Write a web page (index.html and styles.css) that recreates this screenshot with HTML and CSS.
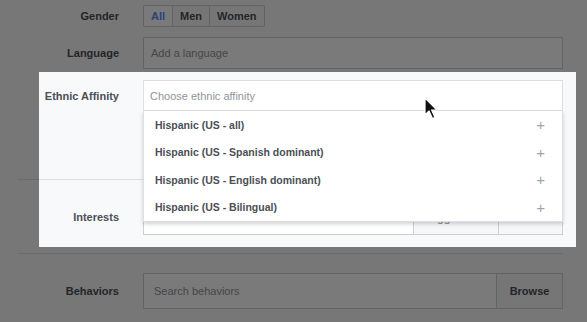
FILE: index.html
```html
<!DOCTYPE html>
<html lang="en">
<head>
  <meta charset="UTF-8">
  <meta name="viewport" content="width=device-width, initial-scale=1.0">
  <title>Audience - Ethnic Affinity</title>
  <link rel="stylesheet" href="styles.css">
</head>
<body>
  <div class="page">
    <div class="form">
      <div class="section first">
        <div class="row">
          <div class="label">Gender</div>
          <div class="control">
            <div class="seg-group">
              <button type="button" class="seg active">All</button><button type="button" class="seg">Men</button><button type="button" class="seg">Women</button>
            </div>
          </div>
        </div>
        <div class="row">
          <div class="label">Language</div>
          <div class="control">
            <div class="field lang">Add a language</div>
          </div>
        </div>
        <div class="row">
          <div class="label">Ethnic Affinity</div>
          <div class="control">
            <div class="field ethnic">Choose ethnic affinity</div>
            <ul class="menu">
              <li class="menu-item"><span>Hispanic (US - all)</span><span class="plus">+</span></li>
              <li class="menu-item"><span>Hispanic (US - Spanish dominant)</span><span class="plus">+</span></li>
              <li class="menu-item"><span>Hispanic (US - English dominant)</span><span class="plus">+</span></li>
              <li class="menu-item"><span>Hispanic (US - Bilingual)</span><span class="plus">+</span></li>
            </ul>
          </div>
        </div>
      </div>

      <div class="section">
        <div class="row">
          <div class="label">Interests</div>
          <div class="control">
            <div class="field search">
              <span class="search-text"></span>
              <span class="side-btn wide">Suggestions</span>
              <span class="side-btn narrow"></span>
            </div>
          </div>
        </div>
      </div>

      <div class="section">
        <div class="row">
          <div class="label">Behaviors</div>
          <div class="control">
            <div class="field search">
              <span class="search-text">Search behaviors</span>
              <span class="side-btn">Browse</span>
            </div>
          </div>
        </div>
      </div>
    </div>

    <!-- highlight over the ethnic affinity field -->
    <div class="spotlight"></div>

    <svg class="cursor" width="16" height="24" viewBox="0 0 16 24">
      <path d="M1 1 L1 18 L5 14 L8.5 21.5 L11 20.4 L7.6 13 L13 13 Z" fill="#111" stroke="#fff" stroke-width="1.2" stroke-linejoin="round"/>
    </svg>
  </div>
</body>
</html>
```

FILE: styles.css
```css
html, body {
  margin: 0;
  padding: 0;
}
body {
  font-family: "Liberation Sans", Arial, sans-serif;
  background: #f8f9fa;
  color: #4b4f56;
  overflow: hidden;
}
.page {
  position: relative;
  width: 587px;
  height: 322px;
}
.form {
  margin-left: 18px;
  width: 545px;
  padding-top: 5px;
}
.section {
  padding: 19px 0 18px;
  border-bottom: 1px solid #dddfe2;
}
.section.first {
  padding: 0 0 68px;
}
.row {
  display: flex;
  align-items: center;
  margin-bottom: 10px;
}
.section .row:last-child {
  margin-bottom: 0;
}
.section.first .row:nth-child(2) {
  margin-bottom: 11px;
}
.label {
  width: 101px;
  margin-right: 24px;
  text-align: right;
  font-size: 11px;
  font-weight: bold;
  color: #4b4f56;
}
.control {
  flex: 1;
  position: relative;
}

/* gender buttons */
.seg-group {
  display: inline-flex;
}
.seg {
  height: 22px;
  padding: 0 7px;
  margin: 0;
  margin-left: -1px;
  border: 1px solid #ccd0d5;
  background: #f6f7f9;
  font-family: inherit;
  font-size: 11px;
  font-weight: bold;
  color: #4b4f56;
}
.seg:first-child {
  margin-left: 0;
  border-radius: 2px 0 0 2px;
}
.seg:last-child {
  border-radius: 0 2px 2px 0;
}
.seg.active {
  color: #5a8cf5;
  background: #fff;
}

/* inputs */
.field {
  box-sizing: border-box;
  border: 1px solid #ccd0d5;
  background: #fff;
  font-size: 11px;
  color: #90949c;
  display: flex;
  align-items: center;
}
.field.lang {
  height: 32px;
  padding-left: 7px;
}
.field.ethnic {
  height: 31px;
  padding-left: 6px;
  border-color: #dddfe2;
}
.field.search {
  height: 36px;
  padding-left: 10px;
}
.search-text {
  flex: 1;
}
.side-btn {
  height: 100%;
  width: 65px;
  display: flex;
  align-items: center;
  justify-content: center;
  border-left: 1px solid #ccd0d5;
  background: #f6f7f9;
  font-weight: bold;
  color: #4b4f56;
}
.side-btn.wide {
  width: 85px;
  padding-top: 1px;
  box-sizing: border-box;
  color: #90949c;
}
.side-btn.narrow {
  width: 63px;
}

/* dropdown */
.menu {
  position: absolute;
  top: 31px;
  left: 0;
  right: 0;
  z-index: 2;
  margin: 0;
  padding: 0;
  list-style: none;
  background: #fff;
  border: 1px solid #dddfe2;
  border-top: 0;
  box-shadow: 0 2px 4px rgba(0, 0, 0, 0.18);
}
.menu-item {
  height: 27.5px;
  display: flex;
  align-items: center;
  justify-content: space-between;
  padding: 0 17px 0 11px;
  font-size: 10.5px;
  font-weight: bold;
  color: #4b4f56;
}
.plus {
  font-size: 15px;
  font-weight: normal;
  color: #a0a4ab;
}

/* dim everything outside the highlighted box */
.spotlight {
  position: absolute;
  left: 39px;
  top: 72px;
  width: 537px;
  height: 175px;
  z-index: 5;
  box-shadow: 0 0 0 700px rgba(0, 0, 0, 0.52);
  pointer-events: none;
}
.cursor {
  position: absolute;
  left: 424px;
  top: 97px;
  z-index: 10;
}
```
